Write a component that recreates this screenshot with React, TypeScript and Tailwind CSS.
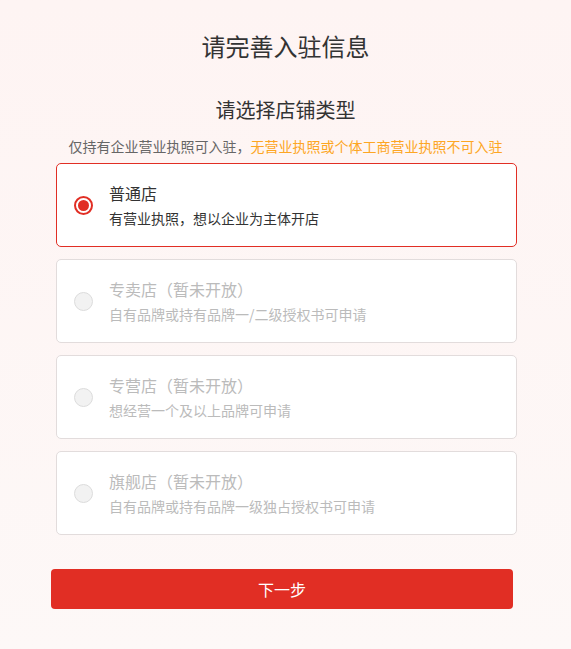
import React, { useState } from 'react'

const font = { fontFamily: '"Microsoft YaHei", "Noto Sans CJK SC", "Noto Sans", sans-serif' }

const shops = [
  { key: 'normal', title: '普通店', desc: '有营业执照，想以企业为主体开店', open: true },
  { key: 'exclusive', title: '专卖店（暂未开放）', desc: '自有品牌或持有品牌一/二级授权书可申请', open: false },
  { key: 'franchise', title: '专营店（暂未开放）', desc: '想经营一个及以上品牌可申请', open: false },
  { key: 'flagship', title: '旗舰店（暂未开放）', desc: '自有品牌或持有品牌一级独占授权书可申请', open: false },
]

function Radio({ checked, disabled }: { checked: boolean; disabled: boolean }) {
  if (disabled) {
    return <span className="w-[19px] h-[19px] rounded-full border border-[#dcdcdc] bg-[#f2f2f2] shrink-0" />
  }
  return (
    <span className="w-[19px] h-[19px] rounded-full border-2 border-[#e12e24] bg-white flex items-center justify-center shrink-0">
      {checked && <span className="w-[11px] h-[11px] rounded-full bg-[#e12e24]" />}
    </span>
  )
}

export default function App() {
  const [selected, setSelected] = useState('normal')

  return (
    <div className="min-h-[649px] bg-gradient-to-b from-[#fef4f3] to-[#fdf8f7] pt-[30px] pb-[40px]" style={font}>
      <h1 className="text-center text-[24px] leading-[32px] text-[#333]">请完善入驻信息</h1>
      <h2 className="mt-[34px] text-center text-[20px] leading-[28px] text-[#333]">请选择店铺类型</h2>
      <p className="mt-[12px] text-center text-[14px] leading-[20px] text-[#666]">
        仅持有企业营业执照可入驻，<span className="text-[#fda623]">无营业执照或个体工商营业执照不可入驻</span>
      </p>

      <div className="ml-[56px] w-[461px] mt-[7px] flex flex-col gap-[12px]">
        {shops.map((s) => {
          const active = selected === s.key
          return (
            <div
              key={s.key}
              onClick={() => s.open && setSelected(s.key)}
              className={`h-[84px] rounded-[5px] bg-white border flex items-center pl-[17px] gap-[16px] ${
                active ? 'border-[#e12e24]' : 'border-[#e2dcdc]'
              } ${s.open ? 'cursor-pointer' : 'cursor-not-allowed'}`}
            >
              <Radio checked={active} disabled={!s.open} />
              <div className="flex flex-col gap-[4px]">
                <div className={`text-[16px] leading-[22px] ${s.open ? 'text-[#333]' : 'text-[#bbb]'}`}>{s.title}</div>
                <div className={`text-[14px] leading-[20px] ${s.open ? 'text-[#333]' : 'text-[#bbb]'}`}>{s.desc}</div>
              </div>
            </div>
          )
        })}

        <button className="mt-[22px] -ml-[5px] w-[462px] h-[40px] rounded-[4px] bg-[#e12e24] text-white text-[16px]">
          下一步
        </button>
      </div>
    </div>
  )
}
